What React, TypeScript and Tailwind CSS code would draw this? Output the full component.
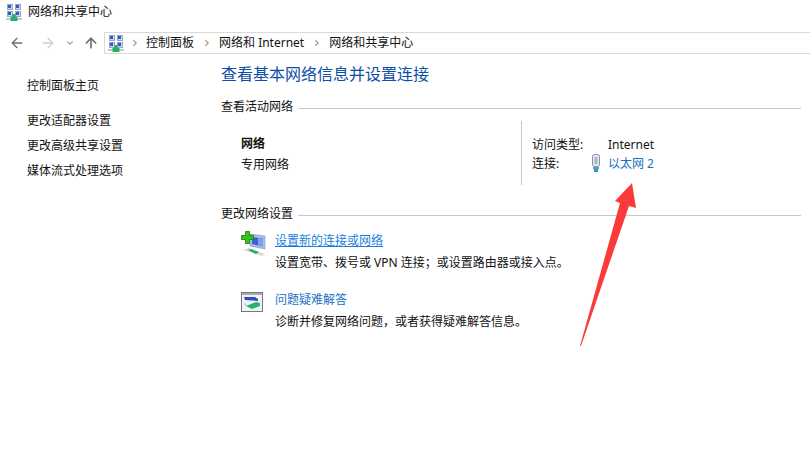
import { ArrowLeft, ArrowRight, ArrowUp, ChevronDown, ChevronRight } from "lucide-react";

const font = "[font-family:'Noto_Sans','Noto_Sans_CJK_SC',sans-serif]";

function NetworkIcon() {
  return (
    <svg width="16" height="17" viewBox="0 0 16 17" className="shrink-0">
      <rect x="1.5" y="0.5" width="5" height="5" fill="#cfd8ea" stroke="#9aa6bb" />
      <rect x="2" y="1" width="3" height="3" fill="#2a5bd0" />
      <rect x="9.5" y="0.5" width="5" height="5" fill="#cfd8ea" stroke="#9aa6bb" />
      <rect x="10" y="1" width="3" height="3" fill="#2a5bd0" />
      <rect x="1.5" y="7.5" width="5" height="5" fill="#cfd8ea" stroke="#9aa6bb" />
      <rect x="2" y="8" width="3" height="3" fill="#2a5bd0" />
      <rect x="9.5" y="7.5" width="5" height="5" fill="#cfd8ea" stroke="#9aa6bb" />
      <rect x="10" y="8" width="3" height="3" fill="#2a5bd0" />
      <rect x="0" y="14" width="16" height="2" fill="#c4c9d0" />
      <path d="M6.5 10h3v3h2v4h-7v-4h2z" fill="#1fb26a" />
    </svg>
  );
}

function SectionTitle({ children }: { children: string }) {
  return (
    <div className="flex items-center gap-[5px] text-[12px] leading-[18px] text-[#111]">
      <span>{children}</span>
      <div className="mt-[3px] h-px flex-1 bg-[#c8c8c8]" />
    </div>
  );
}

function NewConnectionIcon() {
  return (
    <svg width="25" height="26" viewBox="0 0 25 26" className="shrink-0">
      <path d="M9 3l15 2v13L9 15z" fill="#a9bde8" stroke="#7f93c0" strokeWidth="0.6" />
      <path d="M11 6l11 1.5v8L11 13z" fill="#3c62d6" />
      <path d="M17 7l5 .6v8l-5-1z" fill="#7fa0ea" />
      <path d="M2 19l6-2 16 6-3 2z" fill="#d6d9dd" />
      <path d="M7 19l3-1 8 3-3 2z" fill="#1cb268" />
      <path d="M4.500 0.500h4v4h4v4h-4v4h-4v-4h-4v-4h4z" fill="#35c419" stroke="#1d7a12" strokeWidth="0.8" />
    </svg>
  );
}

function TroubleshootIcon() {
  return (
    <svg width="22" height="20" viewBox="0 0 22 20" className="mt-px shrink-0">
      <rect x="0.5" y="0.5" width="21" height="19" fill="#f2f3f4" stroke="#75787d" />
      <rect x="1" y="1" width="20" height="2" fill="#a8abb0" />
      <path d="M3 5l11 0 3 2v2L4 8z" fill="#2c50bc" />
      <path d="M5 14l10-4 4 1v3l-8 3z" fill="#22b56f" />
      <path d="M3 10l3 3-2 1z" fill="#c3c7cc" />
    </svg>
  );
}

function PlugIcon() {
  return (
    <svg width="10" height="19" viewBox="0 0 10 19" className="shrink-0">
      <rect x="1.500" y="0.500" width="7" height="12" rx="2" fill="#e4e7ec" stroke="#8493a8" />
      <rect x="3.500" y="3" width="3" height="7" fill="#a9b6c6" />
      <rect x="2" y="13" width="6" height="2" fill="#6b93ad" />
      <rect x="3" y="15" width="4" height="3" fill="#1fa3d8" />
    </svg>
  );
}

export default function App() {
  return (
    <div className={`relative h-[449px] w-[810px] overflow-hidden bg-white leading-[18px] ${font}`}>
      <div className="flex h-[22px] items-center gap-[6px] pl-[6px] pt-[2px] text-[12px] text-[#111]">
        <NetworkIcon />
        <span>网络和共享中心</span>
      </div>

      <div className="mt-[10px] flex h-[22px] items-center">
        <div className="flex w-[104px] items-center pl-[9px]">
          <ArrowLeft className="h-[16px] w-[16px] text-[#6e6e6e]" strokeWidth={2} />
          <ArrowRight className="ml-[15px] h-[16px] w-[16px] text-[#d0d0d0]" strokeWidth={2} />
          <ChevronDown className="ml-[9px] h-[10px] w-[10px] text-[#8a8a8a]" strokeWidth={2.5} />
          <ArrowUp className="ml-[8px] h-[16px] w-[16px] text-[#6e6e6e]" strokeWidth={2.5} />
        </div>
        <div className="flex h-[22px] flex-1 items-center border border-r-0 border-[#d9d9d9] pl-[3px] text-[12px] text-[#111]">
          <NetworkIcon />
          <ChevronRight className="ml-[6px] h-[10px] w-[10px] text-[#777]" strokeWidth={2.5} />
          <span className="ml-[6px]">控制面板</span>
          <ChevronRight className="ml-[8px] h-[10px] w-[10px] text-[#777]" strokeWidth={2.5} />
          <span className="ml-[7px]">网络和 Internet</span>
          <ChevronRight className="ml-[8px] h-[10px] w-[10px] text-[#777]" strokeWidth={2.5} />
          <span className="ml-[7px]">网络和共享中心</span>
        </div>
      </div>

      <div className="flex">
        <div className="w-[221px] pl-[27px] pt-[23px] text-[12px] text-[#111]">
          <div>控制面板主页</div>
          <div className="mt-[17px] flex flex-col gap-[7px]">
            <div>更改适配器设置</div>
            <div>更改高级共享设置</div>
            <div>媒体流式处理选项</div>
          </div>
        </div>

        <div className="flex-1 pt-[10px] pr-[9px]">
          <h1 className="text-[16px] leading-[21px] text-[#0c4ea8]">查看基本网络信息并设置连接</h1>

          <div className="mt-[13px]">
            <SectionTitle>查看活动网络</SectionTitle>
          </div>

          <div className="mt-[5px] flex h-[64px] text-[12px] text-[#111]">
            <div className="w-[300px] pl-[20px] pt-[14px]">
              <div className="font-bold">网络</div>
              <div className="mt-[3px]">专用网络</div>
            </div>
            <div className="flex flex-col gap-px border-l border-[#c8c8c8] pl-[10px] pt-[15px]">
              <div className="flex">
                <span className="w-[76px]">访问类型:</span>
                <span>Internet</span>
              </div>
              <div className="relative flex items-center">
                <span className="w-[76px]">连接:</span>
                <span className="text-[#1a6fc4]">以太网 2</span>
                <div className="absolute left-[59px] top-[-1px]">
                  <PlugIcon />
                </div>
              </div>
            </div>
          </div>

          <div className="mt-[20px]">
            <SectionTitle>更改网络设置</SectionTitle>
          </div>

          <div className="mt-[8px] flex gap-[9px] pl-[20px] text-[12px] text-[#111]">
            <NewConnectionIcon />
            <div className="pt-[1px]">
              <div className="text-[#1a7fe0] underline">设置新的连接或网络</div>
              <div className="mt-[4px]">设置宽带、拨号或 VPN 连接；或设置路由器或接入点。</div>
            </div>
          </div>

          <div className="mt-[19px] flex gap-[12px] pl-[20px] text-[12px] text-[#111]">
            <TroubleshootIcon />
            <div>
              <div className="text-[#1a6fc4]">问题疑难解答</div>
              <div className="mt-[4px]">诊断并修复网络问题，或者获得疑难解答信息。</div>
            </div>
          </div>
        </div>
      </div>

      <svg width="62" height="170" viewBox="0 0 62 170" className="absolute left-[575px] top-[178px]">
        <path d="M57 5 L61 30 L54 28 L6 168 L5 168 L45 25 L40 23 Z" fill="#fb3a3a" />
      </svg>
    </div>
  );
}
